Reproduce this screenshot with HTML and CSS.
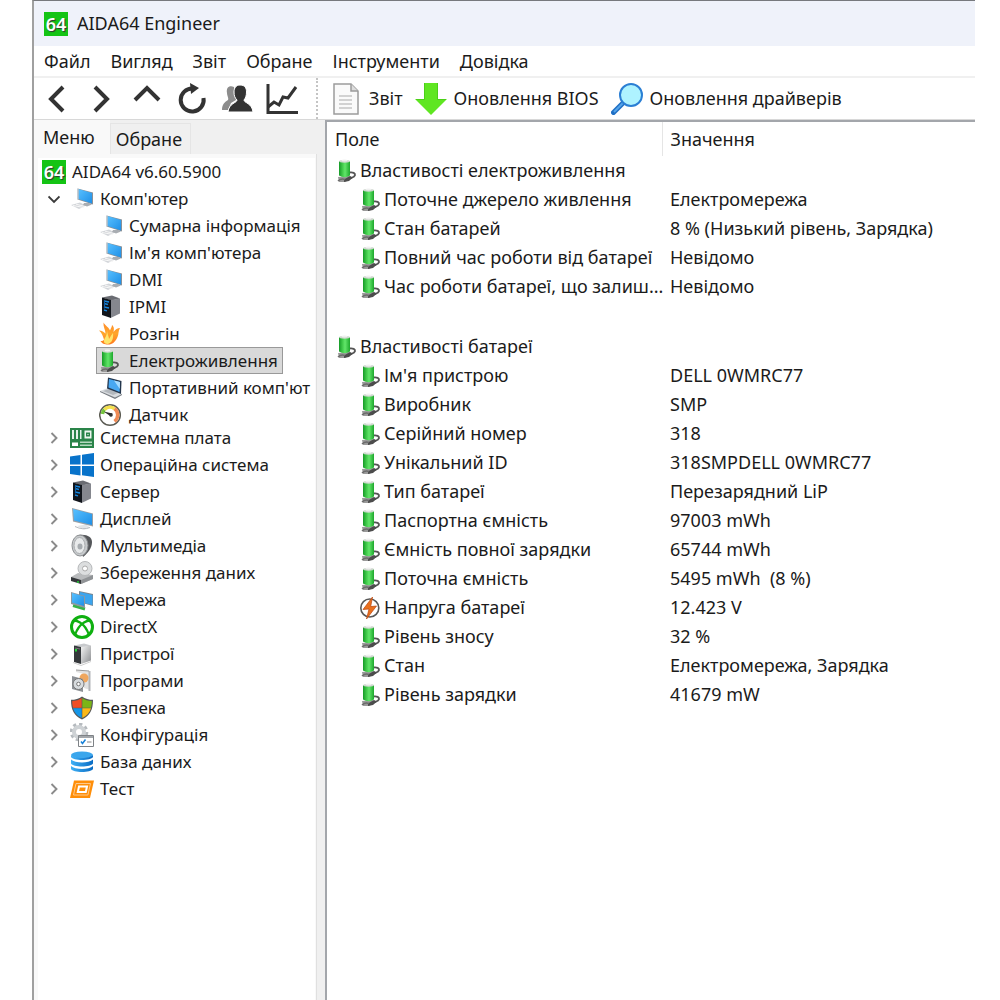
FILE: index.html
```html
<!DOCTYPE html>
<html lang="uk">
<head>
<meta charset="utf-8">
<title>AIDA64 Engineer</title>
<link rel="stylesheet" href="styles.css">
</head>
<body>
<svg class="sprite" width="0" height="0" aria-hidden="true">
  <defs>
    <linearGradient id="g-screen" x1="0" y1="0" x2="1" y2="1"><stop offset="0" stop-color="#58c0ff"/><stop offset="1" stop-color="#1f8fe6"/></linearGradient>
    <linearGradient id="g-batt" x1="0" y1="0" x2="1" y2="0"><stop offset="0" stop-color="#159a27"/><stop offset=".3" stop-color="#3fc849"/><stop offset=".55" stop-color="#62e66a"/><stop offset="1" stop-color="#1da72c"/></linearGradient>
    <linearGradient id="g-metal" x1="0" y1="0" x2="1" y2="1"><stop offset="0" stop-color="#f4f4f4"/><stop offset="1" stop-color="#8b8d90"/></linearGradient>
    <linearGradient id="g-fire" x1="0" y1="0" x2="0" y2="1"><stop offset="0" stop-color="#ff8a2a"/><stop offset=".5" stop-color="#ffa62b"/><stop offset="1" stop-color="#ff7a1f"/></linearGradient>
    <linearGradient id="g-db" x1="0" y1="0" x2="1" y2="0"><stop offset="0" stop-color="#3fb0f5"/><stop offset="1" stop-color="#0a6cc4"/></linearGradient>
    <symbol id="i-pc" viewBox="0 0 24 24">
      <path d="M1 18l9-2.500 6 3-7 3.500z" fill="#d3d6da"/><path d="M3 18.500l11 2M6 17.200l9 2.300" stroke="#f7f7f7"/>
      <path d="M14 16l5 0 3 1.500-5 2-4-1.500z" fill="#a9adb2"/>
      <path d="M7.500 1.500l15.500 4v12L7.500 12.500z" fill="#8a9097"/><path d="M8.500 2l13.500 4v10.500L8.500 12z" fill="url(#g-screen)"/><path d="M8 1.500v11" stroke="#cdd3d8"/>
    </symbol>
    <symbol id="i-laptop" viewBox="0 0 24 24">
      <path d="M1 15l8-3 14 6-7 4.500z" fill="#d9dcdf"/><path d="M1 15l15 6.500 7-3.500v1l-7 4-15-7z" fill="#777c82"/><path d="M4 15l6-2 9 4-5 2z" fill="#b3b8bd"/>
      <path d="M9 1.500l13.500 3.500-.5 13L8 12.500z" fill="#24364c"/><path d="M10 3l11 3-.4 10L9.500 11.500z" fill="#48a8f2"/><path d="M15 4.500l6 1.500-.2 7z" fill="#a8dcff"/>
    </symbol>
    <symbol id="i-display" viewBox="0 0 24 24">
      <path d="M7 19l9-1.500 4 3-6 2z" fill="#e2e5e8"/><path d="M5 19.500q8 4 15 1" stroke="#b7bbc0" fill="none"/>
      <path d="M2 1l21 5.500v13L3 14.500z" fill="#9a9fa4"/><path d="M3 2l19 5v11L4 13.500z" fill="url(#g-screen)"/>
    </symbol>
    <symbol id="i-server" viewBox="0 0 24 24">
      <path d="M3 2.500l10-2 8 3-8.500 2z" fill="#6a6c72"/><path d="M11.500 5l9.500-1.500v15L11.500 23z" fill="#85878e"/><path d="M3 2.500L12 5v18l-9-3z" fill="#11151b"/>
      <path d="M5 6l5 1M5 8.500l4 1M5 12l5 1M5 15l3 .8" stroke="#1887dd" stroke-width="1.300"/><path d="M5.500 5.500v8" stroke="#0e5fa9"/>
    </symbol>
    <symbol id="i-device" viewBox="0 0 24 24">
      <path d="M4 3.500l10-2 7 2-8 2z" fill="#c8cacd"/><path d="M11 5l10-1.500v15L11 22z" fill="url(#g-metal)"/><path d="M4 3.500L11 5v17l-7-2z" fill="#35383b"/><path d="M5 6l5 1" stroke="#777"/><path d="M6 7v2.500" stroke="#28d43a" stroke-width="2"/><path d="M3 20.500l8 3 10-4" stroke="#cfcfcf" fill="none"/>
    </symbol>
    <symbol id="i-fire" viewBox="0 0 24 24">
      <path d="M0 8.500c3 0 5 1.500 6.500 3C6.500 8 4 4.500 4.500.5c2 3.500 5.500 5 6.500 8C12 6 13 5 13 3c2.500 2 2 5 1.500 7 2-2.500 4-4 6.500-4-2 3-1 6-2.500 9-2 5-5.500 7.500-9 7.500-4.500 0-6.500-1-8-3.500 2 0 3-.5 3.500-1.500C4 14.500 3 11 0 8.500z" fill="url(#g-fire)"/><path d="M8 8c0 4 2 6 2 9 1-2 2.500-4 4-6 .5 5-.5 10-5.500 11-3.500 0-4.500-3-2.500-6 1.500-2 2-5 2-8z" fill="#ffe56a"/>
    </symbol>
    <symbol id="i-battery" viewBox="0 0 24 24">
      <path d="M2 18l11-1 3 2-7 4H3z" fill="#9a9a9a"/>
      <path d="M13 13.500c4-.8 6.500.8 6 2.800-.4 1.800-2.500 2.200-5 3.200" stroke="#555" stroke-width="1.800" fill="none"/>
      <path d="M3 2h11v14.500q-5.500 3.500-11 0z" fill="url(#g-batt)"/>
      <path d="M8 20.500l6-3.500 3 1.500-4 3.500-5 1z" fill="#4c4c4c"/>
      <path d="M2 22q3-3 7-1.500" stroke="#6c6c6c" stroke-width="1.500" fill="none"/>
      <ellipse cx="8.500" cy="2.300" rx="5.500" ry="1.400" fill="#cfd8cf"/><ellipse cx="8.500" cy="1.500" rx="3" ry=".9" fill="#f0f0f0"/>
    </symbol>
    <symbol id="i-gauge" viewBox="0 0 24 24">
      <circle cx="11" cy="12" r="10.300" fill="#fff" stroke="#5b5b53" stroke-width="1.500"/>
      <path d="M3.500 11a7.800 7.800 0 0 1 2-4.500" stroke="#77c63e" stroke-width="3.500" fill="none"/><path d="M5.500 6.500A7.800 7.800 0 0 1 15.500 5.700" stroke="#f3e04c" stroke-width="3.500" fill="none"/><path d="M15.500 5.700a7.800 7.800 0 0 1 0 12.600" stroke="#f08a55" stroke-width="3.500" fill="none"/>
      <path d="M4.500 8.500l9 2-1.500 3z" fill="#292929"/><circle cx="12" cy="12" r="1.800" fill="#333"/>
    </symbol>
    <symbol id="i-board" viewBox="0 0 24 24">
      <path d="M0 2h24v20H0z" fill="#2a8449"/><path d="M2 4h2v9H2zm4 0h2v9H6zm4 0h1.500v9H10z" fill="#e5f1e9"/><path d="M14.500 4.500h7v8h-7z" fill="#eef6f0"/><path d="M16 6.500h4v4h-4z" fill="#2a8449"/><path d="M17.500 8h1v1h-1z" fill="#fff"/><path d="M2 16.500h6v3.500H2z" fill="#fff"/><path d="M10 15.500h12v1.500H10zm0 3h12v1.500H10z" fill="#b5d8c0"/>
    </symbol>
    <symbol id="i-windows" viewBox="0 0 24 24"><path d="M0 3.500l10.500-1.500v9.500H0zM12 1.800L24 0v11.500H12zM0 13h10.500v9.500L0 21zM12 13h12v11l-12-1.800z" fill="#0873ca"/></symbol>
    <symbol id="i-speaker" viewBox="0 0 24 24">
      <path d="M9 1c8-1 13 2 13 7 0 6-4 11-9 15z" fill="#55575a"/><ellipse cx="10" cy="11.500" rx="8" ry="10.500" fill="#c7cacc" stroke="#8c8f92"/><ellipse cx="9.500" cy="11.500" rx="5.500" ry="8" fill="#e8eaeb" stroke="#a7aaad"/><ellipse cx="10" cy="12.500" rx="2.500" ry="3" fill="#a6abaf"/>
    </symbol>
    <symbol id="i-disk" viewBox="0 0 24 24">
      <path d="M1 16l7-4 15 2v4l-12 5-10-4z" fill="#b9bbbd"/><path d="M1 16l10 3v4L1 20z" fill="#35383b"/><path d="M11 19l12-5v4l-12 5z" fill="#909396"/><path d="M7 21h2" stroke="#23cf37" stroke-width="1.500"/>
      <circle cx="15" cy="7.500" r="7" fill="#dcdedf" stroke="#b6b8ba"/><circle cx="15" cy="7.500" r="2.500" fill="#fff" stroke="#aaa"/>
    </symbol>
    <symbol id="i-network" viewBox="0 0 24 24">
      <path d="M3 17.500l12 3.500" stroke="#37b34a" stroke-width="3"/><path d="M9 3l14 3v12L9 14z" fill="#7b8790"/><path d="M10 4l12.500 3v10L10 14z" fill="#3ba5ef"/><path d="M1 4l14 4v12L1 16z" fill="#8d979f"/><path d="M2 5l12 3.500V18L2 14.500z" fill="url(#g-screen)"/>
    </symbol>
    <symbol id="i-directx" viewBox="0 0 24 24">
      <circle cx="12" cy="12" r="10.500" fill="#fff" stroke="#0fb010" stroke-width="3"/><path d="M5 20C7 14 10 10 14 7.500c2-1.300 4-2 6-2M19 20c-2-6-5-10-9-12.500-2-1.300-4-2-6-2" stroke="#0fb010" stroke-width="2.300" fill="none"/>
    </symbol>
    <symbol id="i-programs" viewBox="0 0 24 24">
      <path d="M6 1l14 1v19l-6-2V5L6 3z" fill="#e2e2e2"/><path d="M18.500 2h2v20h-2z" fill="#b3b5b8"/><path d="M6 1l13 1" stroke="#999"/><circle cx="14" cy="9" r="4.500" fill="#efa65e"/>
      <path d="M2 7l11 3v13l-11-3z" fill="#8e9297"/><circle cx="8.500" cy="15" r="5.500" fill="#d7dbde" stroke="#777"/><circle cx="8.500" cy="15" r="1.800" fill="#fff" stroke="#777"/>
    </symbol>
    <symbol id="i-shield" viewBox="0 0 24 24">
      <path d="M12 .5c3 2.500 7 3.300 11 3.300C23 14 20 20 12 23.500 4 20 1 14 1 3.800 5 3.800 9 3 12 .5z" fill="#55585a"/>
      <path d="M11.700 2v9.700H3Q2 8 2.200 5 8 5 11.700 2z" fill="#f04e25"/><path d="M12.300 2v9.700H21Q22 8 21.800 5 16 5 12.300 2z" fill="#7bb516"/><path d="M3 12.300h8.700V22Q5 19 3 12.300z" fill="#1496e8"/><path d="M21 12.300h-8.700V22Q19 19 21 12.300z" fill="#fbb817"/>
    </symbol>
    <symbol id="i-config" viewBox="0 0 24 24">
      <circle cx="9" cy="9" r="7.800" fill="none" stroke="#b5babe" stroke-width="3" stroke-dasharray="3.200 2.900"/><circle cx="9" cy="9" r="5" fill="none" stroke="#ced2d5" stroke-width="4"/>
      <path d="M8.500 12.500h15v11h-15z" fill="#fff" stroke="#7e8286"/><path d="M9 13h14v2H9z" fill="#a3a7ab"/><path d="M11 18.500l1.500 2 3-4" stroke="#1681d8" stroke-width="1.500" fill="none"/><path d="M17 19h4.500" stroke="#888"/>
    </symbol>
    <symbol id="i-database" viewBox="0 0 24 24">
      <ellipse cx="12" cy="5" rx="11" ry="3.500" fill="#3aa6ec"/><path d="M1 5v2c2 4 20 4 22 0V5c-3 4-19 4-22 0z" fill="url(#g-db)"/><path d="M1 9.500c4 4 18 4 22 0v4c-2 4-20 4-22 0zM1 16c4 4 18 4 22 0v3c-2 4-20 4-22 0z" fill="url(#g-db)"/>
    </symbol>
    <symbol id="i-test" viewBox="0 0 24 24">
      <path d="M4 3.500h20l-4 17.500H0z" fill="#ff8e08"/><path d="M6 6.500h14.500l-2.600 11.500H3.500z" fill="none" stroke="#ffc98a" stroke-width="1"/><path d="M9 9.500h8l-1.200 5.500H7.800z" fill="#ff8e08" stroke="#fff" stroke-width="2"/>
    </symbol>
    <symbol id="i-volt" viewBox="0 0 24 24">
      <circle cx="9.800" cy="12" r="9" fill="#fff" stroke="#585858" stroke-width="1.600"/><path d="M12.500 1L3 13.500l6-.5-2.500 10L16.500 10l-5.800.6z" fill="#e9701e" stroke="#b9450f" stroke-width=".7"/>
    </symbol>
    <symbol id="i-right" viewBox="0 0 12 12"><path d="M3.500 1l5 5-5 5" fill="none" stroke="#8b8b8b" stroke-width="1.900"/></symbol>
    <symbol id="i-down" viewBox="0 0 12 12"><path d="M0.500 3.500l5.500 5.500 5.500-5.500" fill="none" stroke="#3b3b3b" stroke-width="1.900"/></symbol>
  </defs>
</svg>

<div class="window">
  <header class="titlebar"><span class="logo">64</span><span>AIDA64 Engineer</span></header>

  <nav class="menubar">
    <button>Файл</button><button>Вигляд</button><button>Звіт</button><button>Обране</button><button>Інструменти</button><button>Довідка</button>
  </nav>

  <div class="toolbar">
    <div class="nav-tools">
      <button aria-label="Назад"><svg viewBox="0 0 32 32"><path d="M22 4L10 16l12 12" class="stroke"/></svg></button>
      <button aria-label="Вперед"><svg viewBox="0 0 32 32"><path d="M9 4l12 12L9 28" class="stroke"/></svg></button>
      <button aria-label="Вгору"><svg viewBox="0 0 32 32"><path d="M4 17L16 5l12 12" class="stroke"/></svg></button>
      <button aria-label="Оновити"><svg viewBox="0 0 32 32"><path d="M17 5.500A11.500 11.500 0 1 0 27.500 15" class="stroke"/><path d="M14 0l9 5-8 6z" class="fill"/></svg></button>
      <button aria-label="Користувачі"><svg viewBox="0 0 32 32"><path d="M13 4c-5-2-8 1-7 6 0 3 2 5 1 7-3 2-6 4-6 10h6l3-7 5-3z" fill="#8c8c8c"/><path d="M19 2c5 0 6.500 3 6.500 7s-1 6-2.500 8c0 3 8 3 9 12H7c1-9 9-9 9-12-2-2-3-4-3-8s2-7 6-7z" class="fill outline"/></svg></button>
      <button aria-label="Графік"><svg viewBox="0 0 32 32"><path d="M2 1v28.500h30" class="axis"/><path d="M2 24l6-5 5 3 4-8 5 1 8-11" class="axis"/></svg></button>
    </div>
    <div class="action-tools">
      <button><svg viewBox="0 0 32 32"><path d="M4 1h17l7 7v23H4z" fill="#fafafa" stroke="#9c9c9c" stroke-width="1.500"/><path d="M21 1v7h7" fill="#ddd" stroke="#9c9c9c" stroke-width="1.500"/><path d="M9 13h13M9 17h13M9 21h13M9 25h13" stroke="#aaa" stroke-width="1.200"/></svg><span>Звіт</span></button>
      <button><svg viewBox="0 0 32 32"><path d="M9 0h14v16h9L16 32 0 16h9z" fill="#5fe621"/><path d="M9.500 0v16.500H1M22.500 0v16.500H31" fill="none" stroke="#4bcf18"/></svg><span>Оновлення BIOS</span></button>
      <button><svg viewBox="0 0 32 32"><path d="M13 19L2.500 29.500" stroke="#1f6fc4" stroke-width="5" stroke-linecap="round"/><path d="M13 19L3 29" stroke="#55a4ea" stroke-width="2"/><circle cx="20" cy="12" r="11" fill="#aef3ff" stroke="#2b7fd4" stroke-width="2"/></svg><span>Оновлення драйверів</span></button>
    </div>
  </div>

  <div class="content">
    <aside class="sidebar">
      <div class="tabs" role="tablist"><button class="tab active" role="tab" aria-selected="true">Меню</button><button class="tab" role="tab" aria-selected="false">Обране</button></div>
      <div class="tree-pane">
        <ul class="tree">
          <li><button class="node root"><span class="logo">64</span>AIDA64 v6.60.5900</button></li>
          <li><button class="node"><svg class="chev"><use href="#i-down"/></svg><svg class="icon"><use href="#i-pc"/></svg>Комп'ютер</button>
            <ul class="branch">
              <li><button class="node"><svg class="icon"><use href="#i-pc"/></svg>Сумарна інформація</button></li>
              <li><button class="node"><svg class="icon"><use href="#i-pc"/></svg>Ім'я комп'ютера</button></li>
              <li><button class="node"><svg class="icon"><use href="#i-pc"/></svg>DMI</button></li>
              <li><button class="node"><svg class="icon"><use href="#i-server"/></svg>IPMI</button></li>
              <li><button class="node"><svg class="icon"><use href="#i-fire"/></svg>Розгін</button></li>
              <li><button class="node selected"><svg class="icon"><use href="#i-battery"/></svg>Електроживлення</button></li>
              <li><button class="node"><svg class="icon"><use href="#i-laptop"/></svg>Портативний комп'ют</button></li>
              <li><button class="node"><svg class="icon"><use href="#i-gauge"/></svg>Датчик</button></li>
            </ul>
          </li>
          <li><button class="node"><svg class="chev"><use href="#i-right"/></svg><svg class="icon"><use href="#i-board"/></svg>Системна плата</button></li>
          <li><button class="node"><svg class="chev"><use href="#i-right"/></svg><svg class="icon"><use href="#i-windows"/></svg>Операційна система</button></li>
          <li><button class="node"><svg class="chev"><use href="#i-right"/></svg><svg class="icon"><use href="#i-server"/></svg>Сервер</button></li>
          <li><button class="node"><svg class="chev"><use href="#i-right"/></svg><svg class="icon"><use href="#i-display"/></svg>Дисплей</button></li>
          <li><button class="node"><svg class="chev"><use href="#i-right"/></svg><svg class="icon"><use href="#i-speaker"/></svg>Мультимедіа</button></li>
          <li><button class="node"><svg class="chev"><use href="#i-right"/></svg><svg class="icon"><use href="#i-disk"/></svg>Збереження даних</button></li>
          <li><button class="node"><svg class="chev"><use href="#i-right"/></svg><svg class="icon"><use href="#i-network"/></svg>Мережа</button></li>
          <li><button class="node"><svg class="chev"><use href="#i-right"/></svg><svg class="icon"><use href="#i-directx"/></svg>DirectX</button></li>
          <li><button class="node"><svg class="chev"><use href="#i-right"/></svg><svg class="icon"><use href="#i-device"/></svg>Пристрої</button></li>
          <li><button class="node"><svg class="chev"><use href="#i-right"/></svg><svg class="icon"><use href="#i-programs"/></svg>Програми</button></li>
          <li><button class="node"><svg class="chev"><use href="#i-right"/></svg><svg class="icon"><use href="#i-shield"/></svg>Безпека</button></li>
          <li><button class="node"><svg class="chev"><use href="#i-right"/></svg><svg class="icon"><use href="#i-config"/></svg>Конфігурація</button></li>
          <li><button class="node"><svg class="chev"><use href="#i-right"/></svg><svg class="icon"><use href="#i-database"/></svg>База даних</button></li>
          <li><button class="node"><svg class="chev"><use href="#i-right"/></svg><svg class="icon"><use href="#i-test"/></svg>Тест</button></li>
        </ul>
      </div>
    </aside>

    <main class="details">
      <table>
        <thead><tr><th scope="col" class="field">Поле</th><th scope="col">Значення</th></tr></thead>
        <tbody>
          <tr class="group"><td><svg class="icon"><use href="#i-battery"/></svg>Властивості електроживлення</td><td></td></tr>
          <tr><td><svg class="icon"><use href="#i-battery"/></svg>Поточне джерело живлення</td><td>Електромережа</td></tr>
          <tr><td><svg class="icon"><use href="#i-battery"/></svg>Стан батарей</td><td>8 % (Низький рівень, Зарядка)</td></tr>
          <tr><td><svg class="icon"><use href="#i-battery"/></svg>Повний час роботи від батареї</td><td>Невідомо</td></tr>
          <tr><td><svg class="icon"><use href="#i-battery"/></svg>Час роботи батареї, що залиш...</td><td>Невідомо</td></tr>
          <tr class="spacer"><td></td><td></td></tr>
          <tr class="group"><td><svg class="icon"><use href="#i-battery"/></svg>Властивості батареї</td><td></td></tr>
          <tr><td><svg class="icon"><use href="#i-battery"/></svg>Ім'я пристрою</td><td>DELL 0WMRC77</td></tr>
          <tr><td><svg class="icon"><use href="#i-battery"/></svg>Виробник</td><td>SMP</td></tr>
          <tr><td><svg class="icon"><use href="#i-battery"/></svg>Серійний номер</td><td>318</td></tr>
          <tr><td><svg class="icon"><use href="#i-battery"/></svg>Унікальний ID</td><td>318SMPDELL 0WMRC77</td></tr>
          <tr><td><svg class="icon"><use href="#i-battery"/></svg>Тип батареї</td><td>Перезарядний LiP</td></tr>
          <tr><td><svg class="icon"><use href="#i-battery"/></svg>Паспортна ємність</td><td>97003 mWh</td></tr>
          <tr><td><svg class="icon"><use href="#i-battery"/></svg>Ємність повної зарядки</td><td>65744 mWh</td></tr>
          <tr><td><svg class="icon"><use href="#i-battery"/></svg>Поточна ємність</td><td>5495 mWh&nbsp; (8 %)</td></tr>
          <tr><td><svg class="icon"><use href="#i-volt"/></svg>Напруга батареї</td><td>12.423 V</td></tr>
          <tr><td><svg class="icon"><use href="#i-battery"/></svg>Рівень зносу</td><td>32 %</td></tr>
          <tr><td><svg class="icon"><use href="#i-battery"/></svg>Стан</td><td>Електромережа, Зарядка</td></tr>
          <tr><td><svg class="icon"><use href="#i-battery"/></svg>Рівень зарядки</td><td>41679 mW</td></tr>
        </tbody>
      </table>
    </main>
  </div>
</div>
</body>
</html>
```

FILE: styles.css
```css
* { box-sizing: border-box; }

body {
  margin: 0;
  padding: 0 25px 0 32px;
  background: #fff;
  color: #1b1b1b;
  font: 18px/27px "Noto Sans", "Open Sans", sans-serif;
}

button {
  margin: 0;
  padding: 0;
  border: 0;
  background: none;
  color: inherit;
  font: inherit;
  white-space: nowrap;
}

ul { margin: 0; padding: 0; list-style: none; }
svg { flex: none; display: block; }
.sprite { position: absolute; }

.window {
  display: flex;
  flex-direction: column;
  min-height: 100vh;
  border-top: 1px solid #77797d;
  border-left: 2px solid #a0a0a0;
}

.logo {
  flex: none;
  width: 24px;
  height: 24px;
  background: #14c414;
  color: #fff;
  font: 600 18px/24px "Noto Sans", sans-serif;
  text-align: center;
  text-shadow: 1px 1px 1px #333;
}

/* Title and menus */
.titlebar {
  display: flex;
  align-items: center;
  gap: 9px;
  height: 45px;
  padding-left: 10px;
  background: #eff2fa;
}

.menubar {
  display: flex;
  gap: 20px;
  height: 32px;
  padding-left: 10px;
  border-bottom: 2px solid #f0f0f0;
}

.toolbar {
  display: flex;
  align-items: center;
  height: 42px;
  border-bottom: 1px solid #d8d8d8;
}
.toolbar svg { width: 32px; height: 32px; }

.nav-tools {
  display: flex;
  align-self: stretch;
  width: 284px;
  border-right: 2px dotted #c4c4c4;
}
.nav-tools button { display: grid; place-items: center; width: 45px; }
.stroke { fill: none; stroke: #333; stroke-width: 4; }
.fill { fill: #333; }
.outline { stroke: #fff; stroke-width: 1; }
.axis { fill: none; stroke: #333; stroke-width: 3; }

.action-tools { display: flex; gap: 12px; padding-left: 12px; }
.action-tools button { display: flex; align-items: center; gap: 7px; }

/* Lower panes */
.content { display: flex; flex: 1; background: #f0f0f0; }

.sidebar {
  display: flex;
  flex-direction: column;
  flex: none;
  width: 291px;
  padding-right: 8px;
}

.tabs { display: flex; align-items: flex-end; height: 34px; }
.tab {
  height: 31px;
  padding: 0 8px 0 5px;
  border: 1px solid #e5e5e5;
  border-bottom: 0;
}
.tab.active {
  height: 34px;
  padding: 0 15px 0 9px;
  border: 0;
  background: #f9f9f9;
}

.tree-pane {
  flex: 1;
  padding: 4px 1px 0 4px;
  border-right: 1px solid #e0e0e0;
  background: #f9f9f9;
}
.tree { height: 100%; background: #fff; font-size: 17px; }
.node { display: flex; align-items: center; gap: 6px; height: 27px; padding-left: 10px; }
.node.root { padding-left: 4px; }
.tree .icon { width: 24px; height: 24px; }
.chev { width: 12px; height: 12px; margin-right: 4px; }
.branch { margin-bottom: -4px; padding-left: 58px; }
.branch .node { padding: 0 4px 0 2px; border: 1px solid transparent; }
.branch .selected { background: #d9d9d9; border-color: #999; }

.details {
  flex: 1;
  min-width: 0;
  border-top: 2px solid #a3a6ab;
  border-left: 2px solid #a3a6ab;
  background: #fff;
}

table { width: 100%; border-collapse: collapse; table-layout: fixed; }
th { height: 34px; padding: 0 8px; font-weight: 400; text-align: left; }
.field { width: 335px; border-right: 1px solid #e5e5e5; }
td { height: 29px; padding: 0 8px; line-height: 27px; white-space: nowrap; }
td:first-child { padding: 0 0 0 33px; }
.group td:first-child { padding-left: 9px; }
.spacer td { height: 31px; }
td .icon { display: inline-block; width: 24px; height: 24px; vertical-align: -6px; }
```
